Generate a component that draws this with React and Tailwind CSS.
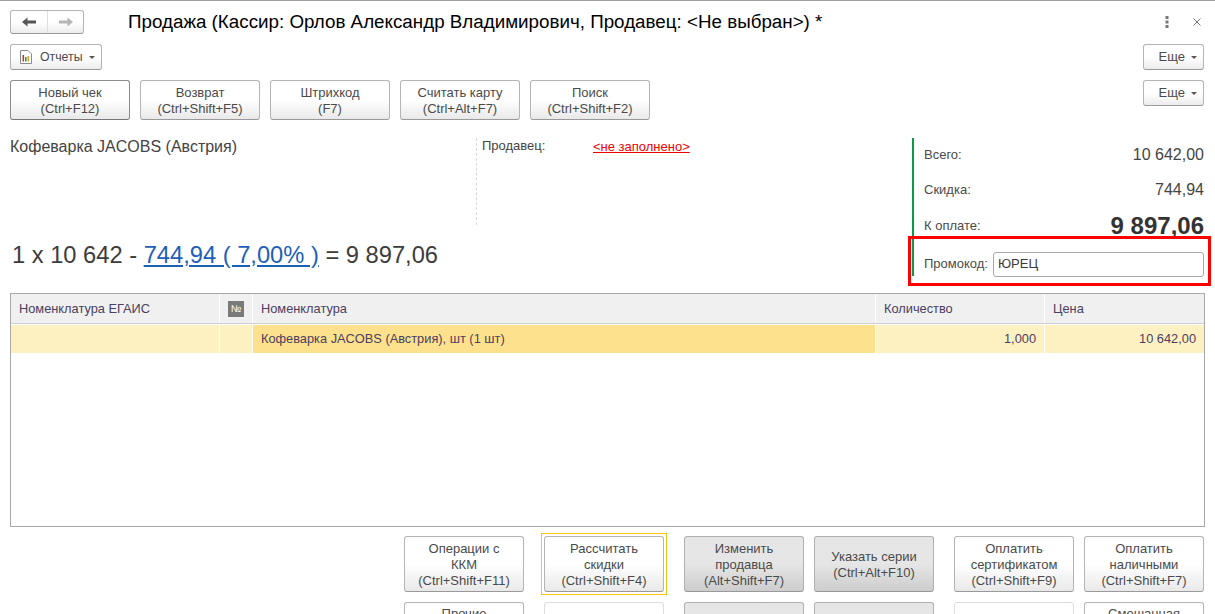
import React from 'react';

const font = 'font-["Liberation_Sans",Arial,sans-serif]';

const Caret = () => <span className="ml-[6px] mt-[1px] w-0 h-0 border-x-[3px] border-x-transparent border-t-[3px] border-t-[#555]" />;

const CmdButton = ({ lines, dark, first, faded, top, className = '' }) => (
  <div
    className={`w-[120px] shrink-0 flex flex-col items-center rounded-[3px] border text-[13px] leading-[16px] text-[#4a4a4a] ${
      top ? 'justify-start pt-[3px]' : 'justify-center pt-[1px]'
    } ${
      dark
        ? 'border-[#b0b0b0] border-b-[#999] bg-gradient-to-b from-[#e6e6e6] from-50% to-[#cdcdcd]'
        : faded
        ? 'border-[#dcdcdc] bg-white'
        : first
        ? 'border-[#8c8c8c] border-b-[#777] bg-gradient-to-b from-white from-50% to-[#e9e9e9]'
        : 'border-[#b4b4b4] border-b-[#999] bg-gradient-to-b from-white from-50% to-[#e9e9e9]'
    } ${className}`}
  >
    {lines.map((l) => (
      <span key={l} className="whitespace-nowrap">{l}</span>
    ))}
  </div>
);

const MoreButton = () => (
  <div className="w-[61px] h-[26px] flex items-center justify-end pr-[6px] rounded-[3px] border border-[#b4b4b4] border-b-[#999] bg-gradient-to-b from-white from-50% to-[#ececec] text-[13px] text-[#4a4a4a]">
    Еще
    <Caret />
  </div>
);

const SumRow = ({ label, children, h }) => (
  <div className={`flex items-center justify-between text-[13px] text-[#4a4a4a] ${h}`}>
    <span>{label}</span>
    {children}
  </div>
);

const th = 'flex items-center px-2 bg-[#f0f0f0] text-[12.8px] text-[#4b4060]';

export default function App() {
  return (
    <div className={`${font} relative w-[1215px] h-[614px] overflow-hidden bg-white border-t border-[#a0a0a0]`}>
      {/* title bar */}
      <div className="flex items-center h-[24px] mt-[9px] pl-[10px] pr-[11px]">
        <div className="w-[74px] h-full flex rounded-[3px] border border-[#b4b4b4] border-b-[#999] bg-gradient-to-b from-white from-50% to-[#ececec]">
          <div className="w-[37px] flex items-center justify-center border-r border-[#dedede]">
            <svg width="14" height="10" viewBox="0 0 14 10">
              <path d="M0 5 L5.5 0.5 V3.6 H14 V6.4 H5.5 V9.5 Z" fill="#555" />
            </svg>
          </div>
          <div className="flex-1 flex items-center justify-center">
            <svg width="14" height="10" viewBox="0 0 14 10">
              <path d="M14 5 L8.5 0.5 V3.6 H0 V6.4 H8.5 V9.5 Z" fill="#b5b5b5" />
            </svg>
          </div>
        </div>
        <div className="ml-[44px] text-[18.8px] text-black whitespace-nowrap">
          Продажа (Кассир: Орлов Александр Владимирович, Продавец: &lt;Не выбран&gt;) *
        </div>
        <div className="ml-auto flex items-center gap-[24px]">
          <svg width="4" height="12" viewBox="0 0 4 12">
            <rect x="0.5" y="0" width="3" height="3" fill="#777" />
            <rect x="0.5" y="4.5" width="3" height="3" fill="#777" />
            <rect x="0.5" y="9" width="3" height="3" fill="#777" />
          </svg>
          <svg width="8" height="8" viewBox="0 0 8 8" className="mr-[3px]">
            <path d="M0.5 0.5 L7.5 7.5 M7.5 0.5 L0.5 7.5" stroke="#777" strokeWidth="1" fill="none" />
          </svg>
        </div>
      </div>

      {/* reports row */}
      <div className="flex justify-between mt-[10px] pl-[10px] pr-[11px]">
        <div className="w-[92px] h-[26px] flex items-center pl-[9px] rounded-[3px] border border-[#b4b4b4] border-b-[#999] bg-gradient-to-b from-white from-50% to-[#ececec] text-[12.3px] text-[#4a4a4a]">
          <svg width="12" height="14" viewBox="0 0 12 14">
            <path d="M0.5 0.5 H8 L11.5 4 V13.5 H0.5 Z" fill="#fff" stroke="#8a8a8a" />
            <rect x="2.5" y="5" width="1.6" height="6.5" fill="#c0392b" />
            <rect x="5" y="7" width="1.6" height="4.5" fill="#2e9e4f" />
            <rect x="7.5" y="6" width="1.6" height="5.5" fill="#d9a520" />
          </svg>
          <span className="ml-[8px]">Отчеты</span>
          <Caret />
        </div>
        <MoreButton />
      </div>

      {/* command bar */}
      <div className="flex justify-between mt-[10px] pl-[10px] pr-[11px]">
        <div className="flex gap-[10px]">
          <CmdButton first className="h-[40px]" lines={['Новый чек', '(Ctrl+F12)']} />
          <CmdButton className="h-[40px]" lines={['Возврат', '(Ctrl+Shift+F5)']} />
          <CmdButton className="h-[40px]" lines={['Штрихкод', '(F7)']} />
          <CmdButton className="h-[40px]" lines={['Считать карту', '(Ctrl+Alt+F7)']} />
          <CmdButton className="h-[40px]" lines={['Поиск', '(Ctrl+Shift+F2)']} />
        </div>
        <MoreButton />
      </div>

      {/* info area */}
      <div className="flex mt-[18px] h-[138px] pl-[10px] pr-[11px]">
        <div className="w-[902px] flex flex-col">
          <div className="flex h-[87px]">
            <div className="w-[466px] pt-[1px] text-[16px] leading-[16px] text-[#444]">Кофеварка JACOBS (Австрия)</div>
            <div className="flex-1 flex border-l border-dashed border-[#d8d8d8] pl-[5px]">
              <div className="w-[111px] text-[13px] leading-[16px] text-[#444]">Продавец:</div>
              <div className="text-[13px] leading-[18px] text-[#f00000] underline">&lt;не заполнено&gt;</div>
            </div>
          </div>
          <div className="mt-[17px] pl-[2px] text-[23.7px] leading-[26px] text-[#3c3c3c]">
            1 х 10 642 - <span className="text-[#1d5fb8] underline">744,94 ( 7,00% )</span> = 9 897,06
          </div>
        </div>
        <div className="relative flex-1 border-l-[2px] border-[#0a9a4a] pl-[10px]">
          <SumRow label="Всего:" h="h-[34px]">
            <span className="text-[16px] text-[#444]">10 642,00</span>
          </SumRow>
          <SumRow label="Скидка:" h="h-[36px]">
            <span className="text-[16px] text-[#444]">744,94</span>
          </SumRow>
          <SumRow label="К оплате:" h="h-[36px]">
            <span className="text-[24px] font-bold text-[#333]">9 897,06</span>
          </SumRow>
          <div className="flex items-center mt-[8px] h-[24px] text-[13px] text-[#4a4a4a]">
            <span>Промокод:</span>
            <div className="ml-[5px] flex-1 h-[25px] flex items-center pl-[4px] rounded-[3px] border border-[#a8a8a8] text-[#3a3a3a]">ЮРЕЦ</div>
          </div>
          <div className="absolute left-[-6px] right-[-7px] top-[98px] h-[50px] border-[3px] border-[#ff0000]" />
        </div>
      </div>

      {/* table */}
      <div className="mt-[17px] ml-[10px] w-[1195px] h-[234px] border border-[#a8a8a8]">
        <div className="grid grid-cols-[208px_32px_622px_168px_1fr] gap-x-px h-[30px] border-b border-[#d0d0d0] bg-white">
          <div className={th}>Номенклатура ЕГАИС</div>
          <div className={`${th} justify-center !px-0`}>
            <span className="w-[16px] h-[16px] flex items-center justify-center bg-[#7a7a7a] text-white text-[10px]">№</span>
          </div>
          <div className={th}>Номенклатура</div>
          <div className={th}>Количество</div>
          <div className={th}>Цена</div>
        </div>
        <div className="grid grid-cols-[208px_32px_622px_168px_1fr] gap-x-px h-[28px] mt-px text-[12.8px] text-[#4b4060]">
          <div className="bg-[#fdf1c2]" />
          <div className="bg-[#fdf1c2]" />
          <div className="flex items-center px-2 bg-[#fee18d]">Кофеварка JACOBS (Австрия), шт (1 шт)</div>
          <div className="flex items-center justify-end px-2 bg-[#fdf1c2]">1,000</div>
          <div className="flex items-center justify-end px-2 bg-[#fdf1c2]">10 642,00</div>
        </div>
      </div>

      {/* bottom buttons */}
      <div className="flex flex-col gap-[10px] mt-[9px] pl-[404px]">
        <div className="flex h-[56px]">
          <CmdButton lines={['Операции с', 'ККМ', '(Ctrl+Shift+F11)']} />
          <div className="relative ml-[20px]">
            <CmdButton className="h-full" lines={['Рассчитать', 'скидки', '(Ctrl+Shift+F4)']} />
            <div className="absolute -inset-[3px] border border-[#f5c518]" />
          </div>
          <CmdButton dark className="ml-[20px]" lines={['Изменить', 'продавца', '(Alt+Shift+F7)']} />
          <CmdButton dark className="ml-[10px]" lines={['Указать серии', '(Ctrl+Alt+F10)']} />
          <CmdButton className="ml-[20px]" lines={['Оплатить', 'сертификатом', '(Ctrl+Shift+F9)']} />
          <CmdButton className="ml-[10px]" lines={['Оплатить', 'наличными', '(Ctrl+Shift+F7)']} />
        </div>
        <div className="flex h-[56px]">
          <CmdButton top lines={['Прочие']} />
          <CmdButton faded className="ml-[20px]" lines={['']} />
          <CmdButton dark className="ml-[20px]" lines={['']} />
          <CmdButton dark className="ml-[10px]" lines={['']} />
          <CmdButton faded className="ml-[20px]" lines={['']} />
          <CmdButton top className="ml-[10px]" lines={['Смешанная']} />
        </div>
      </div>
    </div>
  );
}
